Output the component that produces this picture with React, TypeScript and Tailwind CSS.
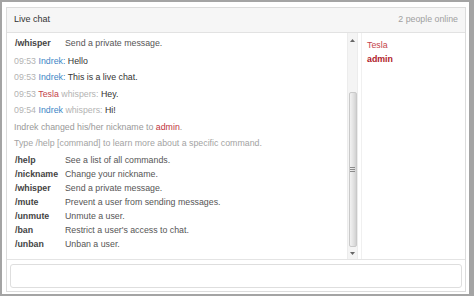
import React from "react";

// ============================================================================
// Data
// ============================================================================

type Command = { name: string; desc: string };

const COMMANDS: Command[] = [
  { name: "/help", desc: "See a list of all commands." },
  { name: "/nickname", desc: "Change your nickname." },
  { name: "/whisper", desc: "Send a private message." },
  { name: "/mute", desc: "Prevent a user from sending messages." },
  { name: "/unmute", desc: "Unmute a user." },
  { name: "/ban", desc: "Restrict a user's access to chat." },
  { name: "/unban", desc: "Unban a user." },
];

const BLUE = "text-[#3d86c6]";
const RED = "text-[#c4444a]";

function CommandRow({ cmd }: { cmd: Command }) {
  return (
    <div className="flex h-[14px] items-center">
      <span className="w-[51px] pl-[1px] font-bold text-[#444]">{cmd.name}</span>
      <span className="text-[#555]">{cmd.desc}</span>
    </div>
  );
}

function Arrow({ up }: { up?: boolean }) {
  return (
    <svg width="5" height="3" viewBox="0 0 5 3">
      <path d={up ? "M0 3 L2.5 0 L5 3 Z" : "M0 0 L2.5 3 L5 0 Z"} fill="#666" />
    </svg>
  );
}

// ============================================================================
// Main Component
// ============================================================================

export default function App() {
  return (
    <div className="w-[474px] h-[296px] bg-[#a4a4a4] pt-[2px] pl-[2px] pr-[5px] pb-[2px] font-['Liberation_Sans',Arial,sans-serif] text-[8.8px] text-[#333]">
      <div className="h-full bg-white pt-[5px] pl-[4px] pr-[3px] pb-[2px]">
        {/* ── PANEL ── */}
        <div className="h-[285px] border border-[#dcdcdc] flex flex-col">
          {/* ── HEADER ── */}
          <div className="h-[25px] shrink-0 bg-[#f6f6f6] border-b border-[#e2e2e2] flex items-center justify-between px-[7px]">
            <span className="text-[9px] text-[#333]">Live chat</span>
            <span className="text-[#a0a0a0]">2 people online</span>
          </div>

          {/* ── BODY ── */}
          <div className="h-[227px] shrink-0 border-b border-[#e4e4e4] flex">
            {/* Messages */}
            <div className="w-[340px] pl-[7px] pt-[3px] leading-none">
              <CommandRow cmd={{ name: "/whisper", desc: "Send a private message." }} />

              <div className="mt-[3px] leading-[16.4px]">
                <p>
                  <span className="text-[#b3b3b3]">09:53</span>{" "}
                  <span className={BLUE}>Indrek:</span> Hello
                </p>
                <p>
                  <span className="text-[#b3b3b3]">09:53</span>{" "}
                  <span className={BLUE}>Indrek:</span> This is a live chat.
                </p>
                <p>
                  <span className="text-[#b3b3b3]">09:53</span>{" "}
                  <span className={RED}>Tesla</span>{" "}
                  <span className="text-[#b3b3b3]">whispers:</span> Hey.
                </p>
                <p>
                  <span className="text-[#b3b3b3]">09:54</span>{" "}
                  <span className={BLUE}>Indrek</span>{" "}
                  <span className="text-[#b3b3b3]">whispers:</span> Hi!
                </p>
                <p className="text-[#999]">
                  Indrek changed his/her nickname to{" "}
                  <span className="text-[#c0343c]">admin</span>.
                </p>
                <p className="text-[#a3a3a3] whitespace-nowrap">
                  Type /help [command] to learn more about a specific command.
                </p>
              </div>

              <div className="mt-[2px]">
                {COMMANDS.map((c) => (
                  <CommandRow key={c.name} cmd={c} />
                ))}
              </div>
            </div>

            {/* Scrollbar */}
            <div className="w-[11px] shrink-0 flex flex-col bg-[#f4f4f4] border-x border-[#ececec]">
              <div className="h-[14px] flex items-center justify-center">
                <Arrow up />
              </div>
              <div className="flex-1">
                <div className="mt-[45px] h-[155px] mx-[0.5px] rounded-[2px] border border-[#c9c9c9] bg-gradient-to-r from-[#f2f2f2] via-[#e4e4e4] to-[#d2d2d2] flex items-center justify-center">
                  <div className="flex flex-col gap-[1px]">
                    <div className="w-[5px] h-[1px] bg-[#8a8a8a]" />
                    <div className="w-[5px] h-[1px] bg-[#8a8a8a]" />
                    <div className="w-[5px] h-[1px] bg-[#8a8a8a]" />
                  </div>
                </div>
              </div>
              <div className="h-[12px] flex items-center justify-center">
                <Arrow />
              </div>
            </div>

            {/* Users */}
            <div className="flex-1 ml-[3px] border-l border-[#f0f0f0] pl-[5px] pt-[5px] leading-[14px]">
              <p className="text-[#c4444a]">Tesla</p>
              <p className="font-bold text-[#b0202a]">admin</p>
            </div>
          </div>

          {/* ── FOOTER ── */}
          <div className="flex-1 px-[3px] pt-[4px]">
            <input
              type="text"
              className="w-full h-[24px] rounded-[3px] border border-[#dedede] bg-white outline-none px-[4px]"
            />
          </div>
        </div>
      </div>
    </div>
  );
}
